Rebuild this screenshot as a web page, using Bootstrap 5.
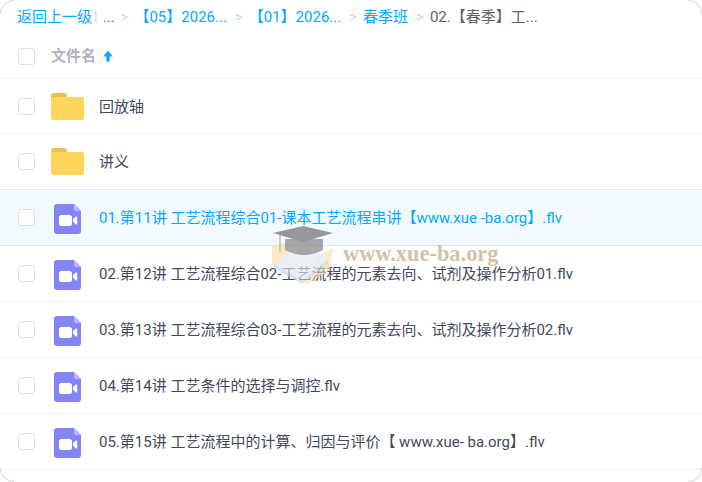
<!DOCTYPE html>
<html lang="zh-CN">
<head>
    <meta charset="UTF-8">
    <meta name="viewport" content="width=device-width, initial-scale=1.0">
    <title>文件列表</title>
    <link href="https://cdn.jsdelivr.net/npm/bootstrap@5.3.2/dist/css/bootstrap.min.css" rel="stylesheet">
    <style>
        html, body {
            height: 100%;
            overflow: hidden;
        }
        body {
            font-family: Roboto, "Noto Sans CJK SC", sans-serif;
            font-size: 15px;
            color: #424a5c;
            background: #fff;
        }
        .page-box {
            height: 482px;
            position: relative;
            overflow: hidden;
        }
        .corner-mark {
            position: absolute;
            width: 14px;
            height: 14px;
            border: 1px solid #d8d8d8;
        }
        .corner-tl { left: 0; top: 0; border-width: 1px 0 0 1px; border-top-left-radius: 14px; }
        .corner-tr { right: 0; top: 0; border-width: 1px 1px 0 0; border-top-right-radius: 14px; }
        .corner-bl { left: 0; bottom: 0; border-width: 0 0 1px 1px; border-bottom-left-radius: 14px; }
        .corner-br { right: 0; bottom: 0; border-width: 0 1px 1px 0; border-bottom-right-radius: 14px; }
        .crumbs {
            height: 34px;
            padding-left: 17px;
            line-height: 34px;
            white-space: nowrap;
        }
        .crumbs a {
            color: #06a7ff;
            text-decoration: none;
        }
        .crumb-sep {
            color: #c4d8f4;
            margin: 0 6px 0 8px;
        }
        .crumb-bar {
            color: #c4d8f4;
            margin: 0 5px 0 2px;
        }
        .crumb-now {
            color: #636363;
        }
        .crumb-dots {
            margin-right: -2px;
        }
        .head-row {
            height: 45px;
            padding-left: 18px;
            border-bottom: 1px solid #f3f4f8;
            font-weight: 700;
            color: #afb3bf;
        }
        .tick-box {
            width: 17px;
            height: 17px;
            flex: none;
            border: 1px solid #dbe0e9;
            border-radius: 3px;
            background: #fff;
        }
        .head-name {
            margin-left: 16px;
        }
        .sort-arrow {
            margin-left: 7px;
        }
        .file-row {
            height: 56px;
            padding-left: 18px;
            border-bottom: 1px solid #f3f4f8;
            white-space: nowrap;
        }
        .file-row.is-first {
            height: 55px;
        }
        .file-row.is-active {
            background: #f3faff;
            border-top: 1px solid #dce8f8;
            border-bottom: 1px solid #dce8f8;
            margin-top: -1px;
            height: 57px;
            color: #06a7ff;
        }
        .icon-slot {
            width: 33px;
            margin-left: 16px;
            flex: none;
            display: flex;
            justify-content: center;
        }
        .video-slot {
            padding-top: 3px;
        }
        .file-name {
            margin-left: 15px;
            padding-top: 2px;
        }
        .water-mark {
            position: absolute;
            left: 272px;
            top: 226px;
            pointer-events: none;
        }
        .water-logo {
            opacity: .75;
        }
        .water-text {
            position: absolute;
            left: 71px;
            top: 17px;
            font-family: "Liberation Serif", serif;
            font-size: 22.4px;
            font-weight: 700;
            line-height: 1;
            color: #c9b48e;
            opacity: .8;
            white-space: nowrap;
        }
    </style>
</head>
<body>
<svg width="0" height="0" class="position-absolute">
    <symbol id="folder-icon" viewBox="0 0 33 27">
        <path d="M0 3a3 3 0 0 1 3-3h10a3 3 0 0 1 3 3v2H0z" fill="#eebf4c"/>
        <path d="M0 6a2 2 0 0 1 2-2h29a2 2 0 0 1 2 2v19a2 2 0 0 1-2 2H2a2 2 0 0 1-2-2z" fill="#ffd659"/>
    </symbol>
    <symbol id="video-icon" viewBox="0 0 27 30">
        <path d="M3 0h17l7 7v20a3 3 0 0 1-3 3H3a3 3 0 0 1-3-3V3a3 3 0 0 1 3-3z" fill="#8385f5"/>
        <path d="M20 0l7 7h-5a2 2 0 0 1-2-2z" fill="#b3b4fa"/>
        <rect x="5" y="11" width="13" height="11" rx="2.5" fill="#fff"/>
        <path d="M19 15l3.4-2.6a.5.5 0 0 1 .8.4v7.4a.5.5 0 0 1-.8.4L19 18z" fill="#fff"/>
    </symbol>
</svg>

<div class="page-box">
    <div class="crumbs">
        <a href="#">返回上一级</a><span class="crumb-bar">|</span><span class="crumb-now crumb-dots">...</span><span class="crumb-sep">&gt;</span><a href="#">【05】2026...</a><span class="crumb-sep">&gt;</span><a href="#">【01】2026...</a><span class="crumb-sep">&gt;</span><a href="#">春季班</a><span class="crumb-sep">&gt;</span><span class="crumb-now">02.【春季】工...</span>
    </div>

    <div class="head-row d-flex align-items-center">
        <span class="tick-box"></span>
        <span class="head-name">文件名</span>
        <svg class="sort-arrow" width="10" height="12" viewBox="0 0 10 12"><path d="M5 0.5L9.8 6.5H6.7V11.5H3.3V6.5H0.2z" fill="#06a7ff"/></svg>
    </div>

    <div class="file-row is-first d-flex align-items-center">
        <span class="tick-box"></span>
        <span class="icon-slot"><svg width="33" height="27"><use href="#folder-icon"/></svg></span>
        <span class="file-name">回放轴</span>
    </div>
    <div class="file-row d-flex align-items-center">
        <span class="tick-box"></span>
        <span class="icon-slot"><svg width="33" height="27"><use href="#folder-icon"/></svg></span>
        <span class="file-name">讲义</span>
    </div>
    <div class="file-row is-active d-flex align-items-center">
        <span class="tick-box"></span>
        <span class="icon-slot video-slot"><svg width="27" height="30"><use href="#video-icon"/></svg></span>
        <span class="file-name">01.第11讲 工艺流程综合01-课本工艺流程串讲【www.xue -ba.org】.flv</span>
    </div>
    <div class="file-row d-flex align-items-center">
        <span class="tick-box"></span>
        <span class="icon-slot video-slot"><svg width="27" height="30"><use href="#video-icon"/></svg></span>
        <span class="file-name">02.第12讲 工艺流程综合02-工艺流程的元素去向、试剂及操作分析01.flv</span>
    </div>
    <div class="file-row d-flex align-items-center">
        <span class="tick-box"></span>
        <span class="icon-slot video-slot"><svg width="27" height="30"><use href="#video-icon"/></svg></span>
        <span class="file-name">03.第13讲 工艺流程综合03-工艺流程的元素去向、试剂及操作分析02.flv</span>
    </div>
    <div class="file-row d-flex align-items-center">
        <span class="tick-box"></span>
        <span class="icon-slot video-slot"><svg width="27" height="30"><use href="#video-icon"/></svg></span>
        <span class="file-name">04.第14讲 工艺条件的选择与调控.flv</span>
    </div>
    <div class="file-row d-flex align-items-center">
        <span class="tick-box"></span>
        <span class="icon-slot video-slot"><svg width="27" height="30"><use href="#video-icon"/></svg></span>
        <span class="file-name">05.第15讲 工艺流程中的计算、归因与评价【 www.xue- ba.org】.flv</span>
    </div>

    <!-- watermark over the list -->
    <div class="water-mark">
        <svg class="water-logo" width="62" height="62" viewBox="0 0 62 62">
            <path d="M0 20L16 16V36L0 40z" fill="#fdd9a0" opacity=".8"/>
            <path d="M46 30L61 22L58 44L32 60z" fill="#fdd9a0" opacity=".7"/>
            <path d="M2 38L18 24H44L56 34L30 54z" fill="#dfe9f2" opacity=".85"/>
            <path d="M2 38L30 54L56 34V38L30 58L2 42z" fill="#bcd3e8" opacity=".8"/>
            <path d="M13 13V24Q32 34 51 24V13z" fill="#8a8a8a"/>
            <path d="M1 7L31 0L61 7L31 16z" fill="#777"/>
            <path d="M8 9V26" stroke="#999" stroke-width="1.2"/>
        </svg>
        <span class="water-text">www.xue-ba.org</span>
    </div>

    <span class="corner-mark corner-tl"></span>
    <span class="corner-mark corner-tr"></span>
    <span class="corner-mark corner-bl"></span>
    <span class="corner-mark corner-br"></span>
</div>
<script src="https://cdn.jsdelivr.net/npm/bootstrap@5.3.2/dist/js/bootstrap.bundle.min.js"></script>
</body>
</html>
